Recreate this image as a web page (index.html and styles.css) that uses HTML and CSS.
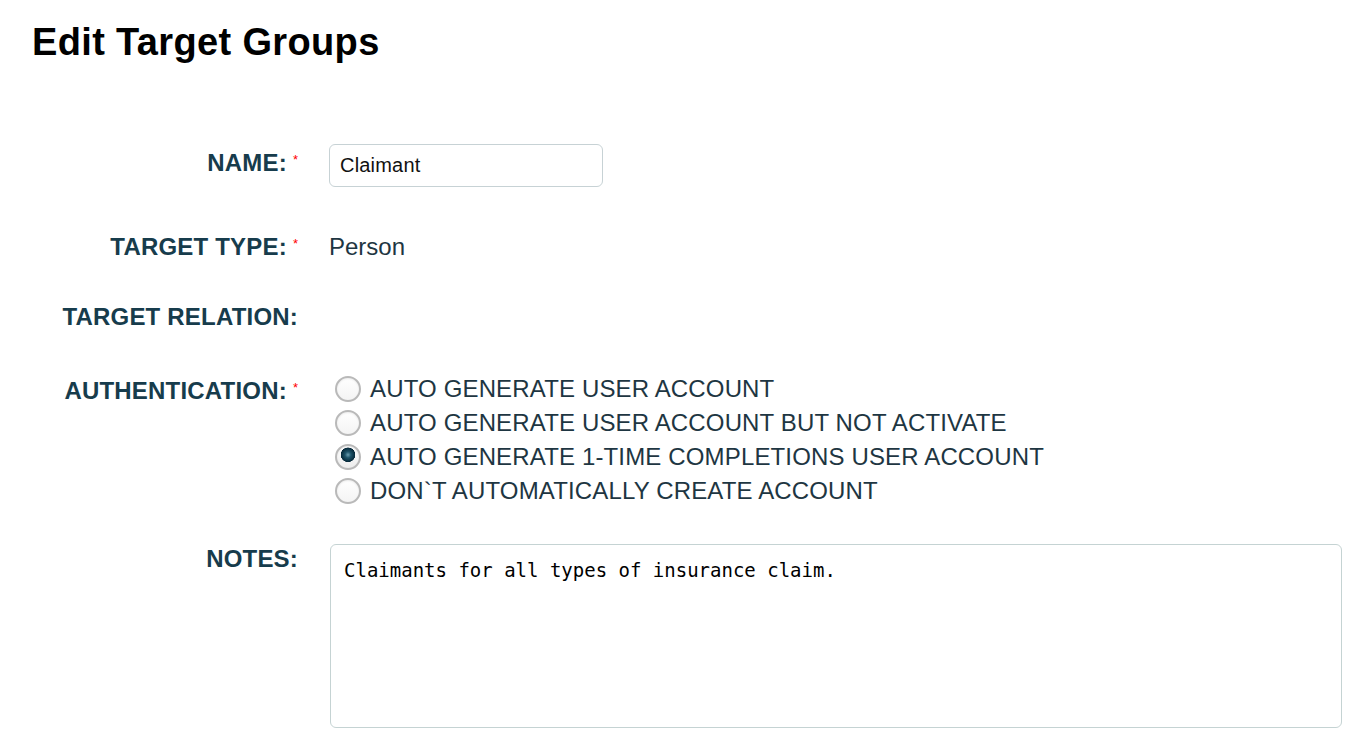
FILE: index.html
```html
<!DOCTYPE html>
<html lang="en">
<head>
    <meta charset="UTF-8">
    <meta name="viewport" content="width=device-width, initial-scale=1.0">
    <title>Edit Target Groups</title>
    <link rel="stylesheet" href="styles.css">
</head>
<body>
    <div class="page">
        <h1>Edit Target Groups</h1>

        <form class="edit-form">
            <div class="row row-name">
                <label class="field-label" for="groupName">NAME:<span class="req">*</span></label>
                <div class="field">
                    <input type="text" id="groupName" class="text-input" value="Claimant">
                </div>
            </div>

            <div class="row row-type">
                <span class="field-label">TARGET TYPE:<span class="req">*</span></span>
                <div class="field value-text">Person</div>
            </div>

            <div class="row row-relation">
                <span class="field-label">TARGET RELATION:</span>
                <div class="field"></div>
            </div>

            <div class="row row-auth">
                <span class="field-label">AUTHENTICATION:<span class="req">*</span></span>
                <div class="field radio-list">
                    <label class="radio-item"><input type="radio" name="auth" value="auto"> AUTO GENERATE USER ACCOUNT</label>
                    <label class="radio-item"><input type="radio" name="auth" value="inactive"> AUTO GENERATE USER ACCOUNT BUT NOT ACTIVATE</label>
                    <label class="radio-item"><input type="radio" name="auth" value="onetime" checked> AUTO GENERATE 1-TIME COMPLETIONS USER ACCOUNT</label>
                    <label class="radio-item"><input type="radio" name="auth" value="none"> DON`T AUTOMATICALLY CREATE ACCOUNT</label>
                </div>
            </div>

            <div class="row row-notes">
                <label class="field-label" for="notes">NOTES:</label>
                <div class="field">
                    <textarea id="notes" class="notes-input">Claimants for all types of insurance claim.</textarea>
                </div>
            </div>
        </form>
    </div>
</body>
</html>
```

FILE: styles.css
```css
body {
    margin: 0;
    font-family: "Liberation Sans", Arial, sans-serif;
    background-color: #fff;
    color: #1e3642;
}
.page {
    padding: 20px 0 0 32px;
}
h1 {
    margin: 0;
    font-size: 38px;
    line-height: 44px;
    font-weight: bold;
    letter-spacing: 0.35px;
    color: #000;
}
.edit-form {
    margin-top: 80px;
}
.row {
    display: grid;
    grid-template-columns: 266px 1fr;
    column-gap: 31px;
    align-items: start;
}
.field-label {
    text-align: right;
    font-size: 24px;
    line-height: 28px;
    font-weight: bold;
    letter-spacing: 0.2px;
    color: #173c4c;
    white-space: nowrap;
}
.req {
    display: inline-block;
    vertical-align: top;
    margin: 4px 0 0 6px;
    font-size: 13px;
    line-height: 13px;
    font-weight: normal;
    letter-spacing: 0;
    color: #f00;
}
.value-text {
    font-size: 24px;
    line-height: 28px;
}

/* row spacing */
.row-name .field-label {
    padding-top: 5px;
}
.row-type {
    margin-top: 46px;
}
.row-relation {
    margin-top: 42px;
}
.row-relation .field {
    height: 28px;
}
.row-auth {
    margin-top: 41px;
}
.row-auth .field-label {
    padding-top: 5px;
}
.row-notes {
    margin-top: 36px;
}
.row-notes .field-label {
    padding-top: 1px;
}

.text-input {
    box-sizing: border-box;
    width: 274px;
    height: 43px;
    padding: 0 10px;
    border: 1px solid #c7d2d5;
    border-radius: 6px;
    font-family: "Liberation Sans", Arial, sans-serif;
    font-size: 20px;
    letter-spacing: 0.2px;
    color: #111;
    outline: none;
}

.radio-list {
    display: flex;
    flex-direction: column;
}
.radio-item {
    display: flex;
    align-items: center;
    height: 34px;
    font-size: 24px;
    letter-spacing: 0.15px;
    color: #1e3642;
    white-space: nowrap;
}
.radio-item input {
    appearance: none;
    -webkit-appearance: none;
    box-sizing: border-box;
    width: 26px;
    height: 26px;
    margin: 0 9px 0 6px;
    border: 2px solid #b9b9b9;
    border-radius: 50%;
    background: linear-gradient(#ffffff, #f4f4f4);
    box-shadow: inset 0 1px 2px rgba(0, 0, 0, 0.08);
}
.radio-item input:checked {
    background: radial-gradient(circle at 50% 40%, #6a9db0 0, #1e5469 3px, #06293a 7px, transparent 7.5px),
                linear-gradient(#ffffff, #ececec);
}

.notes-input {
    box-sizing: border-box;
    display: block;
    width: 1012px;
    height: 184px;
    margin-left: 1px;
    padding: 14px 13px;
    border: 1px solid #c5d3d3;
    border-radius: 6px;
    font-family: "DejaVu Sans Mono", "Liberation Mono", monospace;
    font-size: 19px;
    line-height: 22px;
    color: #000;
    resize: none;
    outline: none;
}
```
